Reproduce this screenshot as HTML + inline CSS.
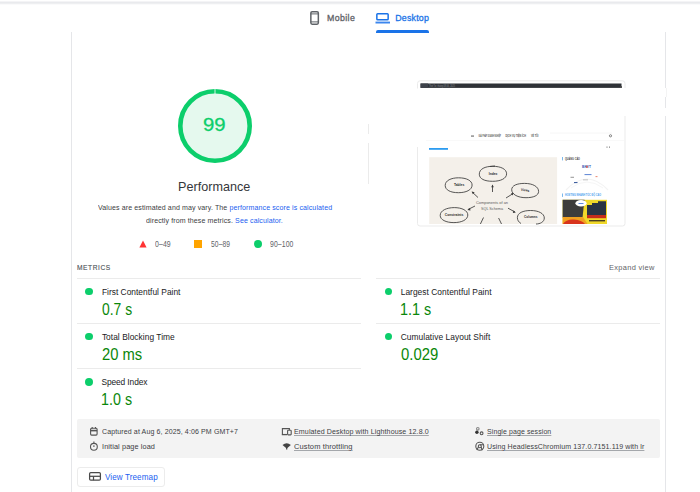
<!DOCTYPE html>
<html><head><meta charset="utf-8">
<style>
*{margin:0;padding:0;box-sizing:border-box}
html,body{width:700px;height:492px;overflow:hidden;background:#fff;font-family:"Liberation Sans",sans-serif;color:#202124}
.a{position:absolute}
.t{position:absolute;white-space:nowrap;line-height:1}
.vl{position:absolute;width:1px;background:#e5e6e9}
.hl{position:absolute;height:1px;background:#ebebeb}
.dot{position:absolute;width:7.8px;height:7.8px;border-radius:50%;background:#0cce6b}
</style></head><body>
<div class="a" style="left:0;top:0;width:700px;height:5px;background:linear-gradient(#fff 0px,#fff 1px,#f4f4f6 1px,#f4f4f6 2px,#e9eaed 2px,#e9eaed 3px,#eeeff1 3px,#eeeff1 4px,#fafafb 4px,#fafafb 5px)"></div>

<!-- tabs -->
<svg class="a" style="left:309px;top:10px" width="12" height="16" viewBox="0 0 12 16">
 <rect x="1.85" y="1.65" width="7.5" height="12.5" rx="1.3" fill="none" stroke="#5f6368" stroke-width="1.5"/>
 <line x1="1.85" y1="3.9" x2="9.35" y2="3.9" stroke="#5f6368" stroke-width="1"/>
 <line x1="1.85" y1="11.9" x2="9.35" y2="11.9" stroke="#5f6368" stroke-width="1"/>
</svg>
<svg class="a" style="left:375px;top:12px" width="16" height="13" viewBox="0 0 16 13">
 <rect x="1.85" y="1.65" width="11.3" height="6.2" rx="0.8" fill="none" stroke="#1a73e8" stroke-width="1.5"/>
 <rect x="0.5" y="9.6" width="14.5" height="1.9" fill="#3b86ee"/>
</svg>
<div class="a" style="left:376px;top:30px;width:53px;height:2.5px;background:#1a73e8;border-radius:2px 2px 0 0"></div>

<div class="vl" style="left:71px;top:32px;height:460px"></div>
<div class="vl" style="left:665px;top:32px;height:56px"></div>
<div class="vl" style="left:666px;top:88px;height:9px;background:#f4f4f4"></div>
<div class="vl" style="left:665px;top:97px;height:11px"></div>
<div class="vl" style="left:665px;top:116px;height:376px"></div>

<!-- gauge -->
<svg class="a" style="left:176px;top:87px" width="78" height="78" viewBox="0 0 78 78">
 <circle cx="39" cy="39" r="34.7" fill="#e5f9ee" stroke="#0cce6b" stroke-width="4.6"/>
 <line x1="39" y1="1" x2="39" y2="7" stroke="#fff" stroke-width="0.8"/>
</svg>

<!-- legend -->
<svg class="a" style="left:139px;top:240px" width="8" height="8" viewBox="0 0 8 8"><polygon points="4,0.5 7.6,7.6 0.4,7.6" fill="#f33"/></svg>
<div class="a" style="left:194.3px;top:240.4px;width:7.6px;height:7.2px;background:#ffa400"></div>
<div class="a" style="left:254px;top:240px;width:7.8px;height:7.8px;border-radius:50%;background:#0cce6b"></div>

<div class="hl" style="left:77px;top:278px;width:284px"></div>
<div class="hl" style="left:376px;top:278px;width:284px"></div>
<div class="hl" style="left:77px;top:323px;width:284px"></div>
<div class="hl" style="left:376px;top:323px;width:284px"></div>
<div class="hl" style="left:77px;top:368px;width:284px"></div>

<div class="dot" style="left:85.1px;top:287.5px"></div>
<div class="dot" style="left:85.1px;top:332.5px"></div>
<div class="dot" style="left:85.1px;top:378.2px"></div>
<div class="dot" style="left:384.6px;top:287.5px"></div>
<div class="dot" style="left:384.6px;top:332.5px"></div>


<!-- thumbnail -->
<svg class="a" style="left:0;top:0" width="700" height="492" viewBox="0 0 700 492">
 <g fill="none" stroke="#ebebeb" stroke-width="1">
  <path d="M417.5 88.5 V83.5 Q417.5 80.8 420.2 80.8 H622.3 Q625 80.8 625 83.5 V88"/>
  <path d="M417.5 147 V223.5 Q417.5 226 420 226 H622.5 Q625 226 625 223.5 V116"/>
  <line x1="368.5" y1="124" x2="368.5" y2="134"/>
  <line x1="368.5" y1="143" x2="368.5" y2="184"/>
 </g>
 <rect x="420.5" y="83.5" width="201" height="4.4" fill="#2f3237"/>
 
 <rect x="620.5" y="86" width="1.5" height="2" fill="#555"/>
 <!-- nav -->
 <line x1="550" y1="133" x2="612" y2="133" stroke="#f4f4f4" stroke-width="0.8"/>
 <line x1="426" y1="140.5" x2="624" y2="140.5" stroke="#f7f7f7" stroke-width="0.8"/>
 <rect x="471" y="135.6" width="3" height="0.9" fill="#444"/>
 <g font-family="Liberation Sans" font-weight="bold" font-size="2.6" fill="#555">
  <text x="478.5" y="137.1" textLength="22.5" lengthAdjust="spacingAndGlyphs">GIẢI PHÁP DOANH NGHIỆP</text>
  <text x="505.5" y="137.1" textLength="20.5" lengthAdjust="spacingAndGlyphs">DỊCH VỤ TIỆN ÍCH</text>
  <text x="531" y="137.1" textLength="7.5" lengthAdjust="spacingAndGlyphs">VỀ TÔI</text>
 </g>
 <circle cx="610.5" cy="135.8" r="1.1" fill="none" stroke="#555" stroke-width="0.7"/>
 <rect x="429" y="148" width="19" height="1.8" fill="#2d9cf0"/>
 <rect x="606.5" y="146.5" width="1" height="1.3" fill="#888"/>
 <rect x="609" y="146.5" width="1" height="1.3" fill="#888"/>
 <rect x="420.6" y="83.5" width="7.5" height="4.3" fill="#3d424a"/><text x="429" y="86.6" font-family="Liberation Sans" font-size="2.6" fill="#8a8e95" textLength="26" lengthAdjust="spacingAndGlyphs">Thứ Tư, tháng 08 06, 2025</text>
 <!-- diagram -->
 <rect x="429.2" y="157.2" width="127.9" height="66.8" fill="#f4f0ea"/>
 <g fill="none" stroke="#3a3a3a" stroke-width="0.85">
  <path d="M479.3 174.2 C479.3 169 485 166.3 492.8 166.3 C501 166.3 506.6 169.2 506.6 173.8 C506.6 178.6 500.5 181.3 492.6 181.3 C484.5 181.3 479.3 178.8 479.3 174.2 Z M490 166.5 L495 166"/>
  <path d="M445.2 185.4 C445.2 180.6 451 177.8 458.6 177.8 C466.4 177.8 472.1 180.6 472.1 185 C472.1 190 466 192.7 458.4 192.7 C450.5 192.7 445.2 190 445.2 185.4 Z"/>
  <path d="M511.7 189.7 C511.7 185.5 517 183.4 524.6 183.4 C533 183.4 538.6 186.8 538.6 191.4 C538.6 195.6 533.4 197.7 526 197.7 C518 197.7 511.7 194.5 511.7 189.7 Z"/>
  <path d="M440.2 215.4 C440.2 210.6 446.5 207.6 454.3 207.6 C462 207.6 467.8 210.6 467.8 215 C467.8 219.7 461.8 222.6 453.9 222.6 C446 222.6 440.2 219.8 440.2 215.4 Z"/>
  <path d="M517.4 217.6 C517.4 213 523 210.5 530.6 210.5 C538.6 210.5 544.3 213.5 544.3 218 C544.3 222 540 224 536 224 M521 223.5 C518.5 222 517.4 220 517.4 217.6"/>
  <path d="M478 197.5 L472.3 192.2 M492.5 192 V185.4 M506 198 L513 193.6 M475 206 L468 209.5 M508 208.2 L515 212 M483.5 217.5 L480.4 224 M498.6 218 L501.5 224"/>
 </g>
 <g fill="#3a3a3a">
  <path d="M471.6 191.5 L474.6 192.3 L472.9 194.3 Z"/>
  <path d="M492.5 184.6 L491.2 187.2 L493.8 187.2 Z"/>
  <path d="M513.8 193 L511 193.2 L512.5 195.5 Z"/>
  <path d="M467.3 209.9 L470 208 L470.5 210.6 Z"/>
  <path d="M515.8 212.5 L513.5 210.5 L512.8 213 Z"/>
 </g>
 <g font-family="Liberation Sans" font-weight="bold" font-size="3.6" fill="#2a2a2a">
  <text x="488.8" y="175.2" textLength="8.6" lengthAdjust="spacingAndGlyphs">Index</text>
  <text x="453.9" y="186" textLength="10.4" lengthAdjust="spacingAndGlyphs">Tables</text>
  <text x="520.9" y="191.3" textLength="8.5" lengthAdjust="spacingAndGlyphs" transform="rotate(8 525 190)">Views</text>
  <text x="444.8" y="216.1" textLength="18.5" lengthAdjust="spacingAndGlyphs">Constraints</text>
  <text x="524.1" y="218.3" textLength="13.4" lengthAdjust="spacingAndGlyphs">Columns</text>
 </g>
 <g font-family="Liberation Sans" font-size="4.2" fill="#5a5a5a">
  <text x="476" y="204.3" textLength="32" lengthAdjust="spacingAndGlyphs">Components of an</text>
  <text x="481" y="209.7" textLength="22" lengthAdjust="spacingAndGlyphs">SQL Schema</text>
 </g>
 <!-- sidebar -->
 <rect x="562" y="157" width="0.8" height="3.4" fill="#5aa8ea"/>
 <text x="565" y="159.8" font-family="Liberation Sans" font-weight="bold" font-size="3" fill="#444" textLength="15" lengthAdjust="spacingAndGlyphs">QUẢNG CÁO</text>
 <path d="M566 190 Q587 168 608 190" fill="none" stroke="#f3f3f3" stroke-width="1.2"/>
 <path d="M571 188 Q587 176 603 188" fill="none" stroke="#f6f6f6" stroke-width="1"/>
 <text x="582" y="167.8" font-family="Liberation Sans" font-weight="bold" font-size="3.2" fill="#3760b8" textLength="9" lengthAdjust="spacingAndGlyphs">BKVT</text>
 <rect x="586.2" y="165.7" width="1.4" height="2" fill="#e04030"/>
 <rect x="584.5" y="174" width="7" height="1.1" fill="#6a8fd8"/>
 <rect x="570.5" y="176.8" width="3.5" height="0.9" fill="#888"/>
 <rect x="595.5" y="176.2" width="2" height="0.9" fill="#ea7a60"/>
 <rect x="583" y="179.4" width="5" height="0.9" fill="#bbb"/>
 <rect x="574" y="182" width="3.5" height="1.1" fill="#3f5f9f"/>
 <rect x="562" y="193.5" width="0.8" height="3.4" fill="#5aa8ea"/>
 <text x="565" y="196.2" font-family="Liberation Sans" font-weight="bold" font-size="3" fill="#4ca0ee" textLength="36" lengthAdjust="spacingAndGlyphs">HOSTING NHANH TỐC ĐỘ CAO</text>
 <!-- ad -->
 <rect x="562.6" y="199.8" width="44.4" height="24.2" fill="#f0d82a"/>
 <path d="M562.6 199.8 H584.5 L582.5 217.5 H562.6 Z" fill="#3c3c3c"/>
 <path d="M562.6 217 H583 L587.5 224 H562.6 Z" fill="#f0a020"/>
 <path d="M563 224 Q566 219 574 219.5 Q582 220 585 224 Z" fill="#d8341c"/>
 <path d="M587 218 V205 H592 V203 H598 V201.2 H606 V218 Z" fill="#2a3444"/>
 <rect x="587" y="215" width="19" height="3.2" fill="#c62d1c"/>
 <rect x="589" y="220" width="16" height="1.4" fill="#4a4020"/>
 <ellipse cx="581" cy="203.2" rx="5.6" ry="3.2" fill="#fff"/>
 <rect x="578.5" y="203" width="5" height="0.9" fill="#4a7ad8"/>
</svg>

<!-- info box -->
<div class="a" style="left:77px;top:419px;width:583px;height:39px;background:#f3f3f3;border-radius:2px"></div>

<!-- treemap button -->
<div class="a" style="left:76.6px;top:466.5px;width:88px;height:20.3px;border:1px solid #ececec;border-radius:3px;background:#fff"></div>


<!-- info icons -->
<svg class="a" style="left:0;top:0" width="700" height="492" viewBox="0 0 700 492">
 <g fill="none" stroke="#555" stroke-width="1.1">
  <rect x="90.6" y="428.2" width="6.5" height="6.9" rx="1"/>
  <line x1="90.6" y1="430.6" x2="97.1" y2="430.6" stroke-width="1.6"/>
  <line x1="92.2" y1="427" x2="92.2" y2="428.5"/>
  <line x1="95.5" y1="427" x2="95.5" y2="428.5"/>
  <circle cx="93.9" cy="446.8" r="3.4"/>
  <line x1="93.9" y1="441.6" x2="93.9" y2="443.4"/>
  <line x1="93.9" y1="445.3" x2="93.9" y2="447" />
  <path d="M282.4 434.2 V428.6 H289.4 V430" />
  <rect x="287.6" y="430.3" width="3.6" height="4.6" rx="0.6"/>
  <line x1="281.8" y1="434.6" x2="287" y2="434.6" stroke-width="1.3"/>
  <circle cx="479.8" cy="446.3" r="4"/>
  <circle cx="479.8" cy="446.3" r="1.5"/>
  <path d="M479.8 444.8 H483.6 M478.5 447 L476.8 450 M481.1 447 L482.3 450.2"/>
  <circle cx="481.6" cy="433.3" r="1.4"/>
  <circle cx="477.8" cy="428.8" r="1.3" stroke="#888"/>
 </g>
 <circle cx="476.9" cy="432.2" r="1.7" fill="#333"/>
 <path d="M282.5 445 Q286.7 441.4 290.9 445 L286.7 448.5 Z" fill="#444"/>
 <line x1="286.7" y1="444.5" x2="286.7" y2="449.4" stroke="#444" stroke-width="1.2"/>
 <g fill="none" stroke="#4a4a4a" stroke-width="1.25">
  <rect x="89.6" y="472.6" width="10.8" height="7.6" rx="1.2"/>
  <line x1="89.6" y1="476.3" x2="100.4" y2="476.3"/>
  <line x1="93.5" y1="476.3" x2="93.5" y2="480.2"/>
 </g>
</svg>
<div class="t" id="tmob" style="left:327.10px;top:13.55px;font-size:8.8px;letter-spacing:0.356px;color:#5f6368;-webkit-text-stroke:0.3px #5f6368">Mobile</div>
<div class="t" id="tdes" style="left:395.20px;top:13.55px;font-size:8.8px;letter-spacing:0.237px;color:#1a73e8;-webkit-text-stroke:0.3px #1a73e8">Desktop</div>
<div class="t" id="g99" style="left:203.00px;top:114.52px;font-size:19px;color:#0cce6b;transform:scaleX(1.070);transform-origin:0.00px 0;-webkit-text-stroke:0.3px #0cce6b">99</div>
<div class="t" id="perf" style="left:178.00px;top:181.23px;font-size:12.6px;letter-spacing:0.021px;color:#35363a;">Performance</div>
<div class="t" id="d1" style="left:97.90px;top:204.04px;font-size:8.1px;letter-spacing:0.12px;color:#3c4043;transform:scaleX(0.871);transform-origin:0.00px 0;">Values are estimated and may vary. The <span style="color:#1a5ef0">performance score is calculated</span></div>
<div class="t" id="d2" style="left:146.40px;top:216.84px;font-size:8.1px;letter-spacing:0.12px;color:#3c4043;transform:scaleX(0.870);transform-origin:0.00px 0;">directly from these metrics. <span style="color:#1a5ef0">See calculator.</span></div>
<div class="t" id="l1" style="left:155.40px;top:239.99px;font-size:8.4px;letter-spacing:0.12px;color:#5f6368;transform:scaleX(0.828);transform-origin:0.00px 0;">0–49</div>
<div class="t" id="l2" style="left:210.70px;top:239.99px;font-size:8.4px;letter-spacing:0.12px;color:#5f6368;transform:scaleX(0.800);transform-origin:0.00px 0;">50–89</div>
<div class="t" id="l3" style="left:270.10px;top:239.99px;font-size:8.4px;letter-spacing:0.12px;color:#5f6368;transform:scaleX(0.820);transform-origin:0.00px 0;">90–100</div>
<div class="t" id="met" style="left:76.90px;top:263.83px;font-size:8.0px;letter-spacing:0.7px;color:#50545a;transform:scaleX(0.828);transform-origin:0.00px 0;-webkit-text-stroke:0.15px #50545a">METRICS</div>
<div class="t" id="exp" style="left:609.30px;top:263.83px;font-size:8.0px;letter-spacing:0.35px;color:#5f6368;transform:scaleX(0.929);transform-origin:0.00px 0;">Expand view</div>
<div class="t" id="m1l" style="left:101.90px;top:287.69px;font-size:8.4px;letter-spacing:0.016px;color:#202124;">First Contentful Paint</div>
<div class="t" id="m1v" style="left:101.90px;top:301.59px;font-size:15.6px;color:#0a870a;transform:scaleX(0.891);transform-origin:0.00px 0;">0.7 s</div>
<div class="t" id="m2l" style="left:101.90px;top:332.79px;font-size:8.4px;letter-spacing:0.037px;color:#202124;">Total Blocking Time</div>
<div class="t" id="m2v" style="left:101.90px;top:346.89px;font-size:15.6px;color:#0a870a;transform:scaleX(0.947);transform-origin:0.00px 0;">20 ms</div>
<div class="t" id="m3l" style="left:101.40px;top:377.89px;font-size:8.4px;letter-spacing:-0.094px;color:#202124;">Speed Index</div>
<div class="t" id="m3v" style="left:100.90px;top:392.19px;font-size:15.6px;color:#0a870a;transform:scaleX(0.915);transform-origin:1.00px 0;">1.0 s</div>
<div class="t" id="m4l" style="left:400.70px;top:287.69px;font-size:8.4px;letter-spacing:0.042px;color:#202124;">Largest Contentful Paint</div>
<div class="t" id="m4v" style="left:399.70px;top:301.59px;font-size:15.6px;color:#0a870a;transform:scaleX(0.924);transform-origin:1.00px 0;">1.1 s</div>
<div class="t" id="m5l" style="left:400.70px;top:332.79px;font-size:8.4px;letter-spacing:0.054px;color:#202124;">Cumulative Layout Shift</div>
<div class="t" id="m5v" style="left:400.70px;top:346.89px;font-size:15.6px;color:#0a870a;transform:scaleX(0.954);transform-origin:0.00px 0;">0.029</div>
<div class="t" id="i1" style="left:101.60px;top:428.34px;font-size:8.1px;letter-spacing:0.12px;color:#3c4043;transform:scaleX(0.870);transform-origin:0.00px 0;">Captured at Aug 6, 2025, 4:06 PM GMT+7</div>
<div class="t" id="i2" style="left:101.60px;top:443.14px;font-size:8.1px;letter-spacing:0.12px;color:#3c4043;transform:scaleX(0.903);transform-origin:0.00px 0;">Initial page load</div>
<div class="t" id="i3" style="left:294.30px;top:428.34px;font-size:8.1px;letter-spacing:0.12px;color:#3c4043;transform:scaleX(0.875);transform-origin:0.00px 0;text-decoration:underline;text-decoration-color:#a4a7ab;text-underline-offset:1.2px">Emulated Desktop with Lighthouse 12.8.0</div>
<div class="t" id="i4" style="left:294.30px;top:443.14px;font-size:8.1px;letter-spacing:0.12px;color:#3c4043;transform:scaleX(0.927);transform-origin:0.00px 0;text-decoration:underline;text-decoration-color:#a4a7ab;text-underline-offset:1.2px">Custom throttling</div>
<div class="t" id="i5" style="left:487.40px;top:428.34px;font-size:8.1px;letter-spacing:0.12px;color:#3c4043;transform:scaleX(0.861);transform-origin:0.00px 0;text-decoration:underline;text-decoration-color:#a4a7ab;text-underline-offset:1.2px">Single page session</div>
<div class="t" id="i6" style="left:487.40px;top:443.14px;font-size:8.1px;letter-spacing:0.12px;color:#3c4043;transform:scaleX(0.871);transform-origin:0.00px 0;text-decoration:underline;text-decoration-color:#a4a7ab;text-underline-offset:1.2px">Using HeadlessChromium 137.0.7151.119 with lr</div>
<div class="t" id="tm" style="left:104.60px;top:471.77px;font-size:9.6px;letter-spacing:0.12px;color:#1a5ef0;transform:scaleX(0.843);transform-origin:0.00px 0;">View Treemap</div>
</body></html>
